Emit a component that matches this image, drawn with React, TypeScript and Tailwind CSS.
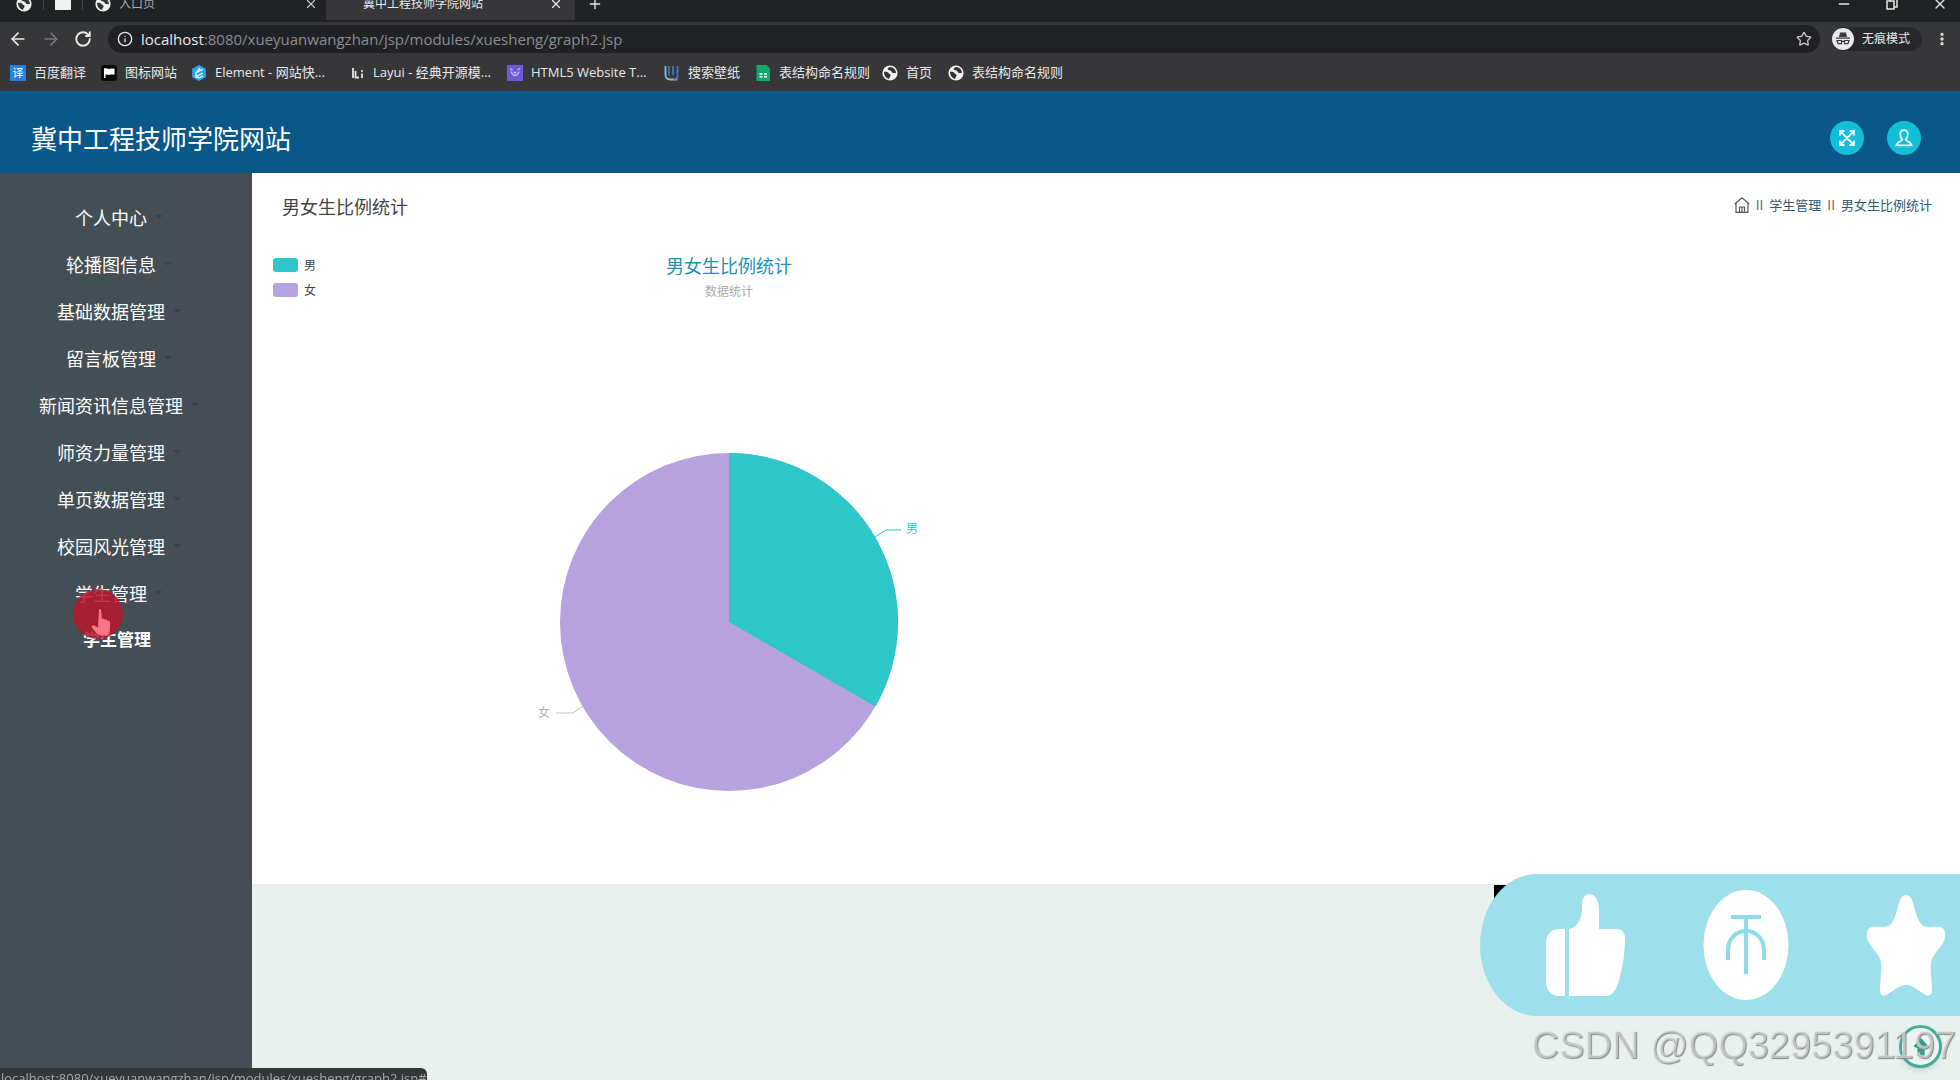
import React from 'react';
import { ArrowLeft, ArrowRight, Info, Minus, MoreVertical, Plus, RotateCw, Star, X } from 'lucide-react';

const GlobeIcon: React.FC = () => (
  <svg viewBox="0 0 16 16" className="size-4 shrink-0" aria-hidden="true">
    <circle cx="8" cy="8" r="7.6" fill="#f1f1f1" />
    <path d="M2 6.800c1.700-.2 3.800.2 4.700 1.400.8 1.100 2.100 1 1.900 2.400-.2 1.200-1.300 1.600-1.600 3.400C4 13.200 2 10.400 2 6.800z" fill="#333" />
    <path d="M8.200 2.100c-1.800.3-3.100 1.500-2.400 2.500.8 1.200 2.600.4 3.400 1.400.8.900.4 1.700 1.800 2.100 1.100.3 1.800-.3 2.900.2.200-3.300-2.400-6.100-5.700-6.200z" fill="#333" />
  </svg>
);

const TranslateIcon: React.FC = () => (
  <span className="flex size-4 shrink-0 items-center justify-center bg-[#2481e8] text-[11px] leading-none text-white">译</span>
);

const FlagIcon: React.FC = () => (
  <svg viewBox="0 0 16 16" className="size-4 shrink-0" aria-hidden="true">
    <rect width="16" height="16" rx="3" fill="#0b0b0b" />
    <path d="M3 3.500c2-1 4 .8 6 .3 1.500-.4 3-.3 4.500 0v6c-1.500-.5-3-.4-4.500 0-1.500.3-3-.6-4.500-.2V13H3z" fill="#fff" />
  </svg>
);

const ElementIcon: React.FC = () => (
  <svg viewBox="0 0 16 16" className="size-4 shrink-0" aria-hidden="true">
    <path d="M8 0l6.800 3.800v8.400L8 16l-6.800-3.800V3.800z" fill="#2ba6ea" />
    <path d="M11.800 4.200L5 8v3.800l6.800-3.800M5 8l4-5M5 11.800l3.500 1 3.300-2" stroke="#d9f3ff" strokeWidth="1.400" fill="none" />
  </svg>
);

const LayuiIcon: React.FC = () => (
  <svg viewBox="0 0 16 16" className="size-4 shrink-0" aria-hidden="true">
    <path d="M4 3v10M6.500 6v6.500H10M13 8.500V13" stroke="#e6e6e6" strokeWidth="1.800" fill="none" />
    <circle cx="13" cy="6" r="1.100" fill="#e6e6e6" />
  </svg>
);

const Html5Icon: React.FC = () => (
  <svg viewBox="0 0 16 16" className="size-4 shrink-0" aria-hidden="true">
    <rect width="16" height="16" fill="#6c5bd6" />
    <path d="M3 3.500l2.500 1.500M13 3.500L10.500 5M4 6.500c1 3 2.500 4 4 4s3-1 4-4M6.500 7l1.500 1.200L9.500 7" stroke="#c9b9ff" strokeWidth="1.300" fill="none" />
  </svg>
);

const WallpaperIcon: React.FC = () => (
  <svg viewBox="0 0 16 16" className="size-4 shrink-0" aria-hidden="true">
    <path d="M1.500 1v9c0 3 2 4.500 5 4.500h7" stroke="#8fb6dd" strokeWidth="1.800" fill="none" />
    <path d="M5 1v9.500M9 1v9.500M13.500 1v10c0 2-2 3-4 3" stroke="#3b78b8" strokeWidth="1.800" fill="none" />
  </svg>
);

const SheetIcon: React.FC = () => (
  <svg viewBox="0 0 16 16" className="size-4 shrink-0" aria-hidden="true">
    <path d="M1.500 0h10l3.500 3.500V16H1.500z" fill="#12a86b" />
    <path d="M4.500 8h3v1.800h-3zM9 8h3v1.800H9zM4.500 11h3v1.500h-3zM9 11h3v1.500H9z" fill="#e6fff4" />
  </svg>
);

const IncognitoIcon: React.FC = () => (
  <svg viewBox="0 0 22 22" className="size-[22px]" aria-hidden="true">
    <circle cx="11" cy="11" r="11" fill="#e9e9ec" />
    <path d="M8 4.500h6l1 4.500H7zM4 9.500h14v1.300H4z" fill="#3a3a3d" />
    <path d="M5 12.500h4.500v3.200H6zM12.500 12.500H17l-1 3.200h-3.500zM9.500 13.300h3" fill="none" stroke="#3a3a3d" strokeWidth="1.200" />
  </svg>
);

const bookmarks = [
  { icon: <TranslateIcon />, label: '百度翻译', width: 'w-[51px]' },
  { icon: <FlagIcon />, label: '图标网站', width: 'w-[50px]' },
  { icon: <ElementIcon />, label: 'Element - 网站快...', width: 'w-[118px]' },
  { icon: <LayuiIcon />, label: 'Layui - 经典开源模...', width: 'w-[118px]' },
  { icon: <Html5Icon />, label: 'HTML5 Website T...', width: 'w-[117px]' },
  { icon: <WallpaperIcon />, label: '搜索壁纸', width: 'w-[51px]' },
  { icon: <SheetIcon />, label: '表结构命名规则', width: 'w-[87px]' },
  { icon: <GlobeIcon />, label: '首页', width: 'w-[26px]' },
  { icon: <GlobeIcon />, label: '表结构命名规则', width: 'w-[87px]' },
];

const menuItems = [
  '个人中心',
  '轮播图信息',
  '基础数据管理',
  '留言板管理',
  '新闻资讯信息管理',
  '师资力量管理',
  '单页数据管理',
  '校园风光管理',
  '学生管理',
];

const legend = [
  { label: '男', color: 'bg-[#2ec7c9]' },
  { label: '女', color: 'bg-[#b6a2de]' },
];

const BrowserChrome: React.FC = () => (
  <div className="bg-[#373739] font-['Open_Sans','Noto_Sans_CJK_SC',sans-serif] text-[#e8e8e8]">
    {/* tab strip, cut off by the top of the screen */}
    <div className="h-[22px] overflow-hidden bg-[#1f2323]">
      <div className="-mt-3 flex h-8 items-center text-xs">
        <div className="flex w-[43px] justify-center pl-1"><GlobeIcon /></div>
        <div className="flex w-10 justify-center border-x border-[#444]">
          <span className="h-3 w-4 bg-[#f1f1f1]" />
        </div>
        <div className="flex w-[243px] items-center gap-2 pr-2 pl-3">
          <GlobeIcon />
          <span className="flex-1 text-[#a9abab]">入口页</span>
          <button type="button" aria-label="关闭标签页"><X className="size-3.5 text-[#c5c7c7]" /></button>
        </div>
        <div className="flex h-full w-[249px] items-center bg-[#37373a] pr-3 pl-[37px]">
          <span className="flex-1">冀中工程技师学院网站</span>
          <button type="button" aria-label="关闭标签页"><X className="size-3.5" /></button>
        </div>
        <button type="button" aria-label="新建标签页" className="ml-3"><Plus className="size-4" /></button>
        <div className="ml-auto flex gap-8 pr-3">
          <button type="button" aria-label="最小化"><Minus className="size-4" /></button>
          <button type="button" aria-label="还原">
            <svg viewBox="0 0 16 16" className="size-4" fill="none" stroke="currentColor" strokeWidth="1.500">
              <path d="M3 5h7v8H3zM6 5V3h7v8h-3" />
            </svg>
          </button>
          <button type="button" aria-label="关闭"><X className="size-4" /></button>
        </div>
      </div>
    </div>

    <div className="flex h-9 items-center pr-[10px] pb-0.5 pl-2">
      <button type="button" aria-label="后退" className="mr-[13px]"><ArrowLeft className="size-5" /></button>
      <button type="button" aria-label="前进" className="mr-[13px]"><ArrowRight className="size-5 text-[#77777a]" /></button>
      <button type="button" aria-label="刷新"><RotateCw className="size-[18px]" strokeWidth={2.500} /></button>
      <div className="ml-4 flex h-7 flex-1 items-center rounded-full bg-[#202124] pr-2 pl-[9px]">
        <Info className="size-4" />
        <p className="ml-2 flex-1 text-[15px] leading-6 text-[#8b8d90]">
          <span className="text-[#e8e8e8]">localhost</span>:8080/xueyuanwangzhan/jsp/modules/xuesheng/graph2.jsp
        </p>
        <button type="button" aria-label="收藏"><Star className="size-4 text-[#c8c8ca]" /></button>
      </div>
      <div className="ml-3 flex h-6 w-[90px] items-center gap-2 rounded-full bg-[#28282a] text-xs">
        <IncognitoIcon />
        无痕模式
      </div>
      <button type="button" aria-label="菜单" className="ml-3"><MoreVertical className="size-4" strokeWidth={3} /></button>
    </div>

    <nav className="flex h-[33px] items-center gap-4 pb-1 pl-[10px] text-[13px]">
      {bookmarks.map((b, i) => (
        <a key={i} href="#" className="flex items-center gap-2 whitespace-nowrap">
          {b.icon}
          <span className={b.width}>{b.label}</span>
        </a>
      ))}
    </nav>
  </div>
);

const PageHeader: React.FC = () => (
  <header className="flex h-[82px] items-center justify-between bg-[#0a578a] pt-3 pr-[39px] pl-[31px]">
    <h1 className="text-[26px] leading-8 text-white">冀中工程技师学院网站</h1>
    <div className="flex gap-[23px]">
      <button type="button" aria-label="全屏" className="flex size-[34px] items-center justify-center rounded-full bg-[#13bfd6]">
        <svg viewBox="0 0 18 18" className="size-[18px]" fill="none" stroke="#e9fbff" strokeWidth="1.800">
          <path d="M2 6.500V2h4.500M11.500 2H16v4.500M16 11.500V16h-4.500M6.500 16H2v-4.500M2.500 2.500l13 13M15.500 2.500l-13 13" />
        </svg>
      </button>
      <button type="button" aria-label="个人信息" className="flex size-[34px] items-center justify-center rounded-full bg-[#13bfd6]">
        <svg viewBox="0 0 18 18" className="size-[18px]" fill="none" stroke="#e9fbff" strokeWidth="1.700">
          <path d="M9 1.200c-2.500 0-3.800 1.800-3.800 4.300 0 2 .8 3.800 2.200 4.900-.3 1.800-5.500 2-6.100 5.900h15.400c-.6-3.900-5.800-4.100-6.100-5.900 1.400-1.100 2.200-2.900 2.200-4.900 0-2.500-1.300-4.300-3.800-4.300z" />
        </svg>
      </button>
    </div>
  </header>
);

const Sidebar: React.FC = () => (
  <aside className="w-[252px] shrink-0 bg-linear-to-r from-[#425055] to-[#474c55] pt-5 text-lg text-white">
    <ul className="pr-[30px]">
      {menuItems.map((item) => (
        <li key={item}>
          <a href="#" className="flex h-[47px] items-center justify-center">
            <span className="relative">
              {item}
              <span className="absolute top-3 left-full ml-2 border-x-4 border-t-4 border-x-transparent border-t-[#394247]" />
            </span>
          </a>
        </li>
      ))}
    </ul>
    <a href="#" className="block pl-[83px] text-[17px] leading-[45px] font-bold">学生管理</a>
  </aside>
);

const PieChart: React.FC = () => (
  <section className="relative mx-[13px] h-[639px] max-w-[928px]">
    <ul className="absolute top-[10px] left-2 flex flex-col gap-[5px] text-xs text-[#444]">
      {legend.map((l) => (
        <li key={l.label} className="flex h-5 items-center gap-1.5">
          <span className={`h-[14px] w-[25px] rounded-[3px] ${l.color}`} />
          {l.label}
        </li>
      ))}
    </ul>
    <div className="pt-2 text-center">
      <h3 className="text-lg leading-6 text-[#2290b5]">男女生比例统计</h3>
      <p className="mt-1 text-xs leading-5 text-[#aaa]">数据统计</p>
    </div>
    <svg viewBox="0 0 400 360" className="mx-auto mt-[139px] h-[360px] w-[400px]" role="img" aria-label="男女生比例统计">
      <circle cx="200" cy="182" r="169" fill="#b6a2de" />
      <path d="M200 182V13A169 169 0 0 1 346.400 266.500z" fill="#2ec7c9" />
      <path d="M346 97l11-7h15" fill="none" stroke="#2ec7c9" />
      <path d="M54 266l-10 7H27" fill="none" stroke="#c3bccb" />
      <text x="377" y="93" fontSize="12" fill="#2ec7c9">男</text>
      <text x="9" y="277" fontSize="12" fill="#b3b0b8">女</text>
    </svg>
  </section>
);

const LikeBanner: React.FC = () => (
  <div className="fixed right-0 bottom-16 h-[142px] w-[480px]">
    <span className="absolute top-[11px] left-[14px] size-4 bg-black" />
    <svg viewBox="0 0 480 142" className="relative h-full w-full" aria-hidden="true">
      <path d="M480 0H57C25 0 0 32 0 71s25 71 57 71h423z" fill="#9edfec" />
      <g fill="#fff">
        <path d="M85 55h-6c-8 0-13 6-13 14v39c0 8 5 14 13 14h6z" />
        <path d="M89 55c9-2 13-10 13-22 0-8 2-13 7-13 7 0 10 8 10 16v19h17c6 0 9 4 9 9 0 17-3 33-7 46-3 8-7 12-12 12H89z" />
        <ellipse cx="266" cy="71" rx="42.500" ry="55" />
        <path d="M426 21c4 0 6 4 7 8 3 12 6 21 11 23 5 2 11 0 16 1 6 1 6 9 4 14-4 8-12 14-13 21-1 9 1 19 1 28 0 6-4 7-8 4-6-4-12-9-18-9s-12 5-18 9c-4 3-8 2-8-4 0-9 2-19 1-28-1-7-9-13-13-21-2-5-2-13 4-14 5-1 11 1 16-1 5-2 8-11 11-23 1-4 3-8 7-8z" />
      </g>
      <path d="M251 43h30M266 43v57M248 86V76c0-11 8-19 18-19s18 8 18 19v10" fill="none" stroke="#8edbe9" strokeWidth="4" />
    </svg>
  </div>
);

const ClickCursor: React.FC = () => (
  <svg viewBox="0 0 50 50" className="fixed top-[589px] left-[73px] size-[50px]" aria-hidden="true">
    <circle cx="25" cy="25" r="25" fill="#b5182b" fillOpacity="0.850" />
    <path
      d="M26 21c.3-1.500 1.700-1.500 2 0l1 9c1-1 2.500-.6 2.800.8 1-.8 2.400-.4 2.700.9 1.200-.6 2.500.2 2.500 1.800v5c0 4-1 6-3 8h-6c-3-1-4-2-6-4l-3-4c-1-1.500.5-2.700 2-2l4 2z"
      fill="#f87787"
    />
  </svg>
);

const BackToTop: React.FC = () => (
  <button
    type="button"
    aria-label="返回顶部"
    className="fixed right-[18px] bottom-3 flex size-[43px] items-center justify-center rounded-full border-3 border-[#45ac97] bg-[#edf5f3] shadow-md"
  >
    <svg viewBox="0 0 20 22" className="size-5" fill="#2f9f88">
      <path d="M10 1l8 9c-1 2-3 2-4 2v8c0 1-1 1-2 1H8c-1 0-2 0-2-1v-8c-1 0-3 0-4-2z" />
    </svg>
  </button>
);

const App: React.FC = () => {
  return (
    <div className="flex h-screen flex-col overflow-hidden font-['Noto_Sans_CJK_SC',sans-serif]">
      <BrowserChrome />
      <PageHeader />
      <div className="flex min-h-0 flex-1">
        <Sidebar />
        <main className="flex-1 bg-[#e9f1ef]">
          <div className="bg-white">
            <div className="flex h-[72px] items-center justify-between pr-7 pb-1.5 pl-[30px]">
              <h2 className="text-lg text-[#444]">男女生比例统计</h2>
              <nav className="flex items-center gap-1.5 pb-0.5 text-[13px] text-[#2a5a78]">
                <svg viewBox="0 0 16 16" className="size-4" fill="none" stroke="#555" strokeWidth="1.200">
                  <path d="M.7 7L8 .8 15.300 7M2 6v9.300h12V6M5.500 15v-5h5v5M8 10v5" />
                </svg>
                <span className="text-[#666]">II</span>
                <a href="#">学生管理</a>
                <span className="text-[#666]">II</span>
                <a href="#">男女生比例统计</a>
              </nav>
            </div>
            <PieChart />
          </div>
        </main>
      </div>

      <ClickCursor />
      <LikeBanner />
      <BackToTop />
      <p className="fixed right-1 bottom-[10px] font-['Liberation_Sans',sans-serif] text-[38px] leading-[50px] text-[#e4e8e7]/60 [text-shadow:1px_1px_1px_#888]">
        CSDN @QQ3295391197
      </p>
      <div className="fixed bottom-0 left-0 h-3 overflow-hidden rounded-tr-md bg-[#333738] pl-px font-['Open_Sans',sans-serif] text-[13px] leading-5 whitespace-nowrap text-[#a5a8a8]">
        localhost:8080/xueyuanwangzhan/jsp/modules/xuesheng/graph2.jsp#
      </div>
    </div>
  );
};

export default App;
